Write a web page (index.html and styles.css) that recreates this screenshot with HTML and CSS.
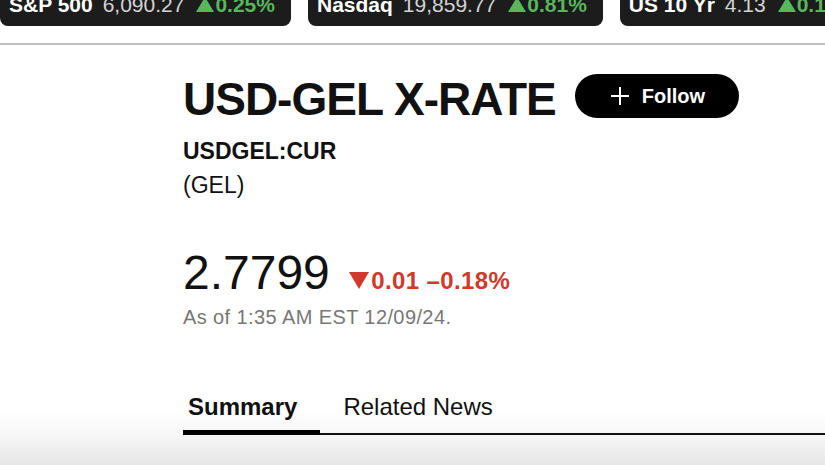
FILE: index.html
```html
<html>
<head>
<title>USD-GEL X-RATE</title>
<link rel="stylesheet" href="styles.css">
</head>
<body>

<div class="ticker">
<div class="pill">
<span class="sym">S&amp;P 500</span>
<span class="val">6,090.27</span>
<span class="chg up"><svg class="tri" width="18" height="15" viewBox="0 0 18 15"><polygon points="9,0 18,15 0,15"/></svg>0.25%</span>
</div>
<div class="pill">
<span class="sym">Nasdaq</span>
<span class="val">19,859.77</span>
<span class="chg up"><svg class="tri" width="18" height="15" viewBox="0 0 18 15"><polygon points="9,0 18,15 0,15"/></svg>0.81%</span>
</div>
<div class="pill">
<span class="sym">US 10 Yr</span>
<span class="val">4.13</span>
<span class="chg up"><svg class="tri" width="18" height="15" viewBox="0 0 18 15"><polygon points="9,0 18,15 0,15"/></svg>0.16%</span>
</div>
</div>

<div class="rule"></div>

<div class="quote">
<div class="head">
<h1>USD-GEL X-RATE</h1>
<a class="follow" href="#">
<svg width="18" height="18" viewBox="0 0 18 18"><path d="M9 0V18M0 9H18" stroke="#fff" stroke-width="2"/></svg>
Follow
</a>
</div>
<div class="code">USDGEL:CUR</div>
<div class="ccy">(GEL)</div>
<div class="price-row">
<span class="price">2.7799</span>
<span class="change down"><svg class="tri" width="20" height="17" viewBox="0 0 20 17"><polygon points="0,0 20,0 10,17"/></svg>0.01 &ndash;0.18%</span>
</div>
<div class="asof">As of 1:35 AM EST 12/09/24.</div>

<div class="tabs">
<a class="tab active" href="#">Summary</a>
<a class="tab" href="#">Related News</a>
</div>
</div>

</body>
</html>
```

FILE: styles.css
```css
html {
	height: 100%;
	background: linear-gradient(#fff 412px, #f4f4f4 440px, #e6e6e6 465px);
}
body {
	font-family: "Liberation Sans", Arial, sans-serif;
	color: #111;
	margin: 0;
	padding: 0;
	overflow: hidden;
}
a {
	color: inherit;
	text-decoration: none;
}

/* market strip */
.ticker {
	display: flex;
	gap: 17px;
	margin-top: -5px;
	white-space: nowrap;
	overflow: hidden;
}
.pill {
	display: flex;
	gap: 10px;
	flex-shrink: 0;
	height: 31px;
	padding: 0 16px 0 9px;
	background: #1c1c1c;
	border-radius: 0 0 8px 8px;
	font-size: 21px;
	line-height: 20px;
}
.pill .sym {
	color: #fff;
	font-weight: bold;
}
.pill .val {
	color: #d4d4d4;
}
.chg {
	font-weight: bold;
}
.up {
	color: #58b65b;
}
.up .tri {
	fill: #58b65b;
	margin-left: 2px;
	margin-right: 1px;
}
.rule {
	height: 2px;
	background: #c2c2c2;
	margin-top: 17px;
}

/* quote header */
.quote {
	margin-left: 183px;
}
.head {
	display: flex;
	align-items: flex-start;
	gap: 19px;
	margin-top: 31px;
}
h1 {
	margin: 0;
	font-size: 46px;
	line-height: 46px;
	font-weight: bold;
	letter-spacing: -1px;
}
.follow {
	display: flex;
	align-items: center;
	gap: 13px;
	height: 44px;
	margin-top: -2px;
	padding: 0 34px 0 36px;
	background: #000;
	color: #fff;
	border-radius: 22px;
	font-size: 20px;
	font-weight: bold;
}
.code {
	margin-top: 16px;
	font-size: 23px;
	line-height: 26px;
	font-weight: bold;
}
.ccy {
	margin-top: 8px;
	font-size: 23px;
	line-height: 26px;
}
.price-row {
	margin-top: 50px;
	font-size: 48px;
	line-height: 50px;
}
.price {
	margin-right: 6px;
}
.change {
	font-size: 24px;
	line-height: 24px;
	font-weight: bold;
	letter-spacing: 0.4px;
}
.down {
	color: #d0392b;
}
.down .tri {
	fill: #d0392b;
	margin-right: 2px;
}
.asof {
	margin-top: 7px;
	font-size: 20px;
	line-height: 24px;
	color: #777;
	letter-spacing: 0.4px;
}

/* tabs */
.tabs {
	display: flex;
	gap: 18px;
	margin-top: 64px;
	border-bottom: 2px solid #111;
}
.tab {
	padding: 0 23px 9px 5px;
	margin-bottom: -2px;
	font-size: 24px;
	line-height: 28px;
	border-bottom: 5px solid transparent;
}
.tab.active {
	font-weight: bold;
	border-bottom-color: #000;
}
```
